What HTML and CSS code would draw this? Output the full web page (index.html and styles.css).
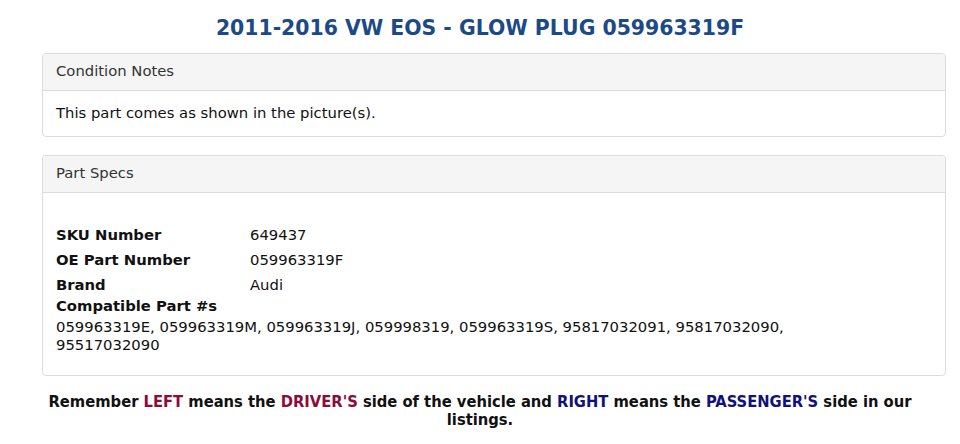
FILE: index.html
```html
<!DOCTYPE html>
<html>
	<head>
		<meta charset="utf-8">
		<title>2011-2016 VW EOS - GLOW PLUG 059963319F</title>
		<link rel="stylesheet" href="styles.css">
	</head>
	<body>
		<h1 class="title">2011-2016 VW EOS - GLOW PLUG 059963319F</h1>
		<div class="wrap">
			<div class="panel">
				<div class="panel-head">Condition Notes</div>
				<div class="panel-body">This part comes as shown in the picture(s).</div>
			</div>
			<div class="panel">
				<div class="panel-head">Part Specs</div>
				<div class="panel-body specs">
					<div class="row"><b>SKU Number</b><span>649437</span></div>
					<div class="row"><b>OE Part Number</b><span>059963319F</span></div>
					<div class="row"><b>Brand</b><span>Audi</span></div>
					<div class="compat">
						<b>Compatible Part #s</b>
						<p>059963319E, 059963319M, 059963319J, 059998319, 059963319S, 95817032091, 95817032090, 95517032090</p>
					</div>
				</div>
			</div>
		</div>
		<p class="note">Remember <span class="left">LEFT</span> means the <span class="left">DRIVER'S</span> side of the vehicle and <span class="right">RIGHT</span> means the <span class="right">PASSENGER'S</span> side in our listings.</p>
	</body>
</html>
```

FILE: styles.css
```css
* {margin: 0;padding: 0;box-sizing: border-box;}
body {font-family: "DejaVu Sans", sans-serif;font-size: 14.8px;color: #111;background: #fff;}
.title {font-size: 20.4px;font-weight: bold;color: #1c4a86;text-align: center;padding-top: 16px;height: 53px;}
.wrap {padding: 0 14px 0 42px;}
.panel {border: 1px solid #dcdcdc;border-radius: 4px;margin-bottom: 18px;overflow: hidden;}
.panel-head {background: #f5f5f5;border-bottom: 1px solid #dcdcdc;height: 37px;line-height: 34px;padding: 0 13px;color: #333;}
.panel-body {padding: 12px 13px 13px;line-height: 20px;}
.specs {padding-top: 29px;padding-bottom: 21px;}
.specs .row {display: flex;height: 25px;line-height: 25px;}
.specs .row b {width: 194px;}
.compat b {display: block;line-height: 17px;}
.compat p {line-height: 18px;margin-top: 4px;max-width: 800px;}
.note {font-family: "DejaVu Sans Condensed", "DejaVu Sans", sans-serif;font-weight: bold;font-size: 16.4px;text-align: center;line-height: 18px;padding: 0 40px;margin-top: -1px;}
.left {color: #8b0b3b;}
.right {color: #11117c;}
```
